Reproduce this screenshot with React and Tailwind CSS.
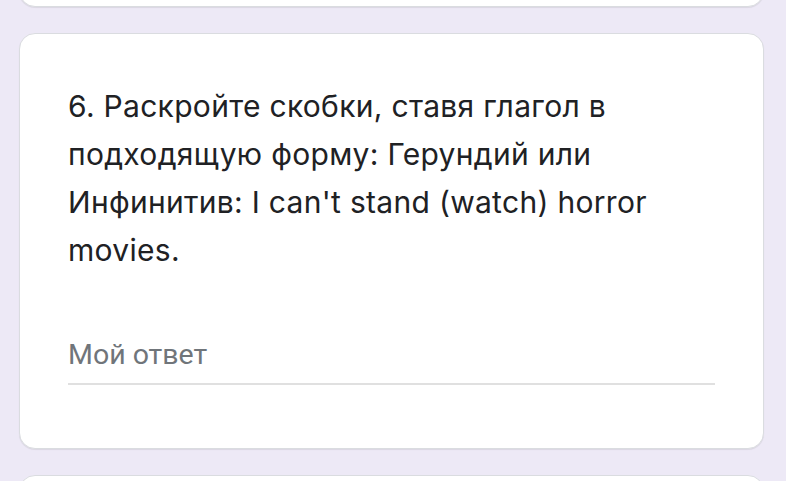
export default function App() {
  return (
    <div className="h-[481px] w-[786px] overflow-hidden bg-[#ede9f6]">
      <div className="flex flex-col gap-[26px] -mt-[40px]">
        <div className="ml-[19px] w-[745px] h-[47px] shrink-0 rounded-[16px] bg-white border border-[#dadce0] shadow-[0_1px_1px_rgba(0,0,0,0.08)]" />
        <div className="ml-[19px] w-[745px] shrink-0 rounded-[16px] bg-white border border-[#dadce0] shadow-[0_1px_1px_rgba(0,0,0,0.08)] pt-[48px] pb-[63px] px-[48px]">
          <div className="text-[30px] leading-[48px] text-[#202124] tracking-[0.3px] whitespace-nowrap" style={{ fontFamily: 'Inter, "Noto Sans", sans-serif' }}>
            6. Раскройте скобки, ставя глагол в<br />
            подходящую форму: Герундий или<br />
            Инфинитив: I can't stand (watch) horror<br />
            movies.
          </div>
          <div className="mt-[65px] pb-[12px] border-b-2 border-[#e0e0e0]">
            <div className="text-[28.5px] leading-[32px] text-[#70757a]" style={{ fontFamily: 'Roboto, sans-serif' }}>Мой ответ</div>
          </div>
        </div>
        <div className="ml-[19px] w-[745px] h-[60px] shrink-0 rounded-[16px] bg-white border border-[#dadce0]" />
      </div>
    </div>
  );
}
